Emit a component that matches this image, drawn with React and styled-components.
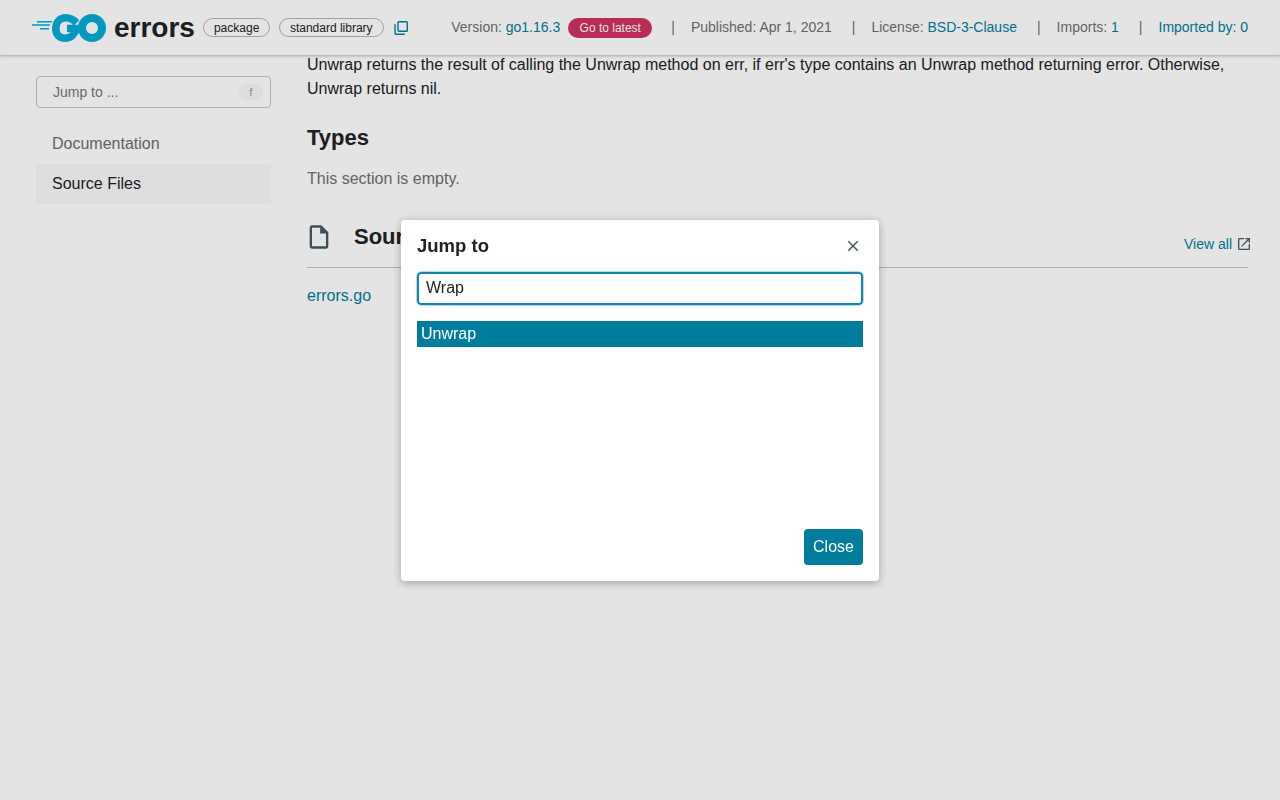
import React from 'react';
import styled, { createGlobalStyle } from 'styled-components';

const Global = createGlobalStyle`
  html, body {
    margin: 0;
    padding: 0;
    background: #fff;
    font-family: "Liberation Sans", Arial, sans-serif;
    color: #202224;
  }
  * {
    box-sizing: border-box;
  }
`;

const Page = styled.div`
  height: 800px;
  overflow: hidden;
`;

const Header = styled.header`
  position: relative;
  z-index: 2;
  height: 55px;
  padding: 0 32px;
  display: flex;
  align-items: center;
  background: #fff;
  box-shadow: 0 1px 2px rgba(0, 0, 0, 0.18), 0 1px 4px rgba(0, 0, 0, 0.12);
`;

const Logo = styled.svg`
  flex: none;
  width: 74px;
  height: 28px;
  margin-right: 8px;
`;

const Title = styled.h1`
  margin: 0 8px 0 0;
  font-size: 28px;
  line-height: 32px;
  font-weight: 700;
`;

const Chip = styled.span`
  height: 19px;
  padding: 0 10px;
  margin-right: 8.6px;
  display: flex;
  align-items: center;
  border: 1px solid #b5b5b5;
  border-radius: 10px;
  font-size: 12px;
  white-space: nowrap;
`;

const CopyButton = styled.svg`
  flex: none;
  width: 14px;
  height: 14px;
  margin-left: 1.4px;
  fill: none;
  stroke: #007d9c;
  stroke-width: 1.4;
`;

const Meta = styled.div`
  margin-left: auto;
  padding-bottom: 2px;
  display: flex;
  align-items: center;
  font-size: 14px;
  color: #6e6e6e;
  white-space: nowrap;
`;

const Sep = styled.span`
  margin: 0 16px 0 20px;
  color: #6e6e6e;
`;

const Link = styled.a`
  color: #007d9c;
  text-decoration: none;
`;

const Latest = styled.span`
  width: 84px;
  height: 20px;
  margin: 3px -1px 0 8px;
  display: flex;
  align-items: center;
  justify-content: center;
  border-radius: 10px;
  background: #ce3262;
  color: #fff;
  font-size: 12px;
`;

const Body = styled.div`
  margin-top: -3px;
  padding: 1px 32px 0 36px;
  display: flex;
  gap: 36px;
`;

const Sidebar = styled.aside`
  flex: none;
  width: 235px;
  padding-top: 23px;
`;

const JumpBox = styled.div`
  height: 32px;
  padding: 0 7px 0 16px;
  margin-bottom: 16px;
  display: flex;
  align-items: center;
  justify-content: space-between;
  border: 1px solid #c2c2c2;
  border-radius: 4px;
  font-size: 14px;
  color: #767676;
`;

const Key = styled.span`
  width: 24px;
  height: 16px;
  display: flex;
  align-items: center;
  justify-content: center;
  border-radius: 8px;
  background: #f8f8f8;
  font-size: 10px;
  color: #8a8a8a;
`;

const NavItem = styled.div`
  height: 40px;
  padding-left: 16px;
  display: flex;
  align-items: center;
  font-size: 16px;
  color: ${(p) => (p.$active ? '#202224' : '#6e6e6e')};
  background: ${(p) => (p.$active ? '#f9f9f9' : 'transparent')};
`;

const Main = styled.main`
  flex: 1;
  min-width: 0;
`;

const Text = styled.p`
  margin: 0;
  font-size: 16px;
  line-height: 24px;
`;

const Muted = styled(Text)`
  margin-top: 16px;
  color: #6e6e6e;
`;

const Heading = styled.h2`
  margin: 24px 0 0;
  font-size: 22px;
  line-height: 26px;
  font-weight: 700;
`;

const SectionHead = styled.div`
  margin-top: 24px;
  height: 53px;
  padding: 4px 0 12px;
  display: flex;
  align-items: center;
  border-bottom: 1px solid #c2c2c2;
`;

const FileIcon = styled.svg`
  flex: none;
  width: 28px;
  height: 28px;
  margin-right: 19px;
  margin-left: -2px;
  fill: #455a64;
`;

const SectionTitle = styled.h2`
  margin: 0 0 0 2px;
  font-size: 22px;
  font-weight: 700;
`;

const ViewAll = styled(Link)`
  margin-left: auto;
  margin-right: -2px;
  padding-top: 14px;
  display: flex;
  align-items: center;
  gap: 6px;
  font-size: 14px;
`;

const ExternalIcon = styled.svg`
  width: 12px;
  height: 12px;
  fill: #455a64;
`;

const FileRow = styled.div`
  margin-top: 16px;
  font-size: 16px;
  line-height: 24px;
`;

const Backdrop = styled.div`
  position: fixed;
  inset: 0;
  z-index: 10;
  display: flex;
  align-items: center;
  justify-content: center;
  background: rgba(0, 0, 0, 0.106);
`;

const Dialog = styled.div`
  width: 478px;
  height: 361px;
  margin-top: 1px;
  padding: 16px;
  display: flex;
  flex-direction: column;
  border-radius: 4px;
  background: #fff;
  box-shadow: 0 2px 10px rgba(0, 0, 0, 0.3);
`;

const DialogHead = styled.div`
  height: 20px;
  display: flex;
  align-items: center;
  justify-content: space-between;
`;

const DialogTitle = styled.h3`
  margin: 0;
  font-size: 18.5px;
  font-weight: 700;
`;

const CloseIcon = styled.svg`
  width: 18px;
  height: 18px;
  margin-right: 1px;
  fill: #455a64;
`;

const Input = styled.input`
  width: 100%;
  height: 33px;
  margin-top: 16px;
  padding: 0 7px 2px;
  border: 2px solid #1485ad;
  border-radius: 4px;
  outline: 1px solid #b5dcea;
  outline-offset: 0;
  font: 16px "Liberation Sans", Arial, sans-serif;
  color: #202224;
`;

const Results = styled.div`
  flex: 1;
  margin-top: 16px;
`;

const Result = styled.div`
  height: 26px;
  padding-left: 4px;
  display: flex;
  align-items: center;
  font-size: 16px;
  background: ${(p) => (p.$selected ? '#007d9c' : 'transparent')};
  color: ${(p) => (p.$selected ? '#fff' : '#202224')};
`;

const Footer = styled.div`
  display: flex;
  justify-content: flex-end;
`;

const CloseButton = styled.button`
  width: 59px;
  height: 36px;
  padding: 0;
  border: none;
  border-radius: 4px;
  background: #007d9c;
  color: #fff;
  font: 16px "Liberation Sans", Arial, sans-serif;
`;

const GoLogo = () => (
  <Logo viewBox="0 0 74 28">
    <g fill="none" stroke="#00add8">
      <path d="M5 7.7H20M0 11H18M8 14.7H17" strokeWidth="1.4" />
      <path
        d="M44.5 9C41.5 5.5 38 3.8 34 3.8C27 3.8 23.8 9 23.8 14.5C23.8 20.5 27.5 24.2 33 24.2C39 24.2 43 20 44.5 14.5H35"
        strokeWidth="7.5"
      />
      <circle cx="60" cy="14" r="10" strokeWidth="8" />
    </g>
  </Logo>
);

const App = () => (
  <Page>
    <Global />
    <Header>
      <GoLogo />
      <Title>errors</Title>
      <Chip>package</Chip>
      <Chip>standard library</Chip>
      <CopyButton viewBox="0 0 14 14">
        <rect x="4" y="0.7" width="9.3" height="9.6" rx="0.9" />
        <path d="M1 3.2v9a1.1 1.1 0 0 0 1.1 1.1h8.7" />
      </CopyButton>
      <Meta>
        <span>
          Version: <Link>go1.16.3</Link>
        </span>
        <Latest>Go to latest</Latest>
        <Sep>|</Sep>
        <span>Published: Apr 1, 2021</span>
        <Sep>|</Sep>
        <span>
          License: <Link>BSD-3-Clause</Link>
        </span>
        <Sep>|</Sep>
        <span>
          Imports: <Link>1</Link>
        </span>
        <Sep>|</Sep>
        <Link>Imported by: 0</Link>
      </Meta>
    </Header>
    <Body>
      <Sidebar>
        <JumpBox>
          Jump to ...
          <Key>f</Key>
        </JumpBox>
        <NavItem>Documentation</NavItem>
        <NavItem $active>Source Files</NavItem>
      </Sidebar>
      <Main>
        <Text>
          Unwrap returns the result of calling the Unwrap method on err, if err's type contains an
          Unwrap method returning error. Otherwise, Unwrap returns nil.
        </Text>
        <Heading>Types</Heading>
        <Muted>This section is empty.</Muted>
        <SectionHead>
          <FileIcon viewBox="0 0 24 24">
            <path d="M14 2H6c-1.1 0-1.99.9-1.99 2L4 20c0 1.1.89 2 1.99 2H18c1.1 0 2-.9 2-2V8l-6-6zM6 20V4h7v5h5v11H6z" />
          </FileIcon>
          <SectionTitle>Source Files</SectionTitle>
          <ViewAll>
            View all
            <ExternalIcon viewBox="3 3 18 18">
              <path d="M19 19H5V5h7V3H5a2 2 0 0 0-2 2v14a2 2 0 0 0 2 2h14c1.1 0 2-.9 2-2v-7h-2v7zM14 3v2h3.59l-9.83 9.83 1.41 1.41L19 6.41V10h2V3h-7z" />
            </ExternalIcon>
          </ViewAll>
        </SectionHead>
        <FileRow>
          <Link>errors.go</Link>
        </FileRow>
      </Main>
    </Body>
    <Backdrop>
      <Dialog>
        <DialogHead>
          <DialogTitle>Jump to</DialogTitle>
          <CloseIcon viewBox="0 0 24 24">
            <path d="M19 6.41L17.59 5 12 10.59 6.41 5 5 6.41 10.59 12 5 17.59 6.41 19 12 13.41 17.59 19 19 17.59 13.41 12z" />
          </CloseIcon>
        </DialogHead>
        <Input defaultValue="Wrap" />
        <Results>
          <Result $selected>Unwrap</Result>
        </Results>
        <Footer>
          <CloseButton>Close</CloseButton>
        </Footer>
      </Dialog>
    </Backdrop>
  </Page>
);

export default App;
